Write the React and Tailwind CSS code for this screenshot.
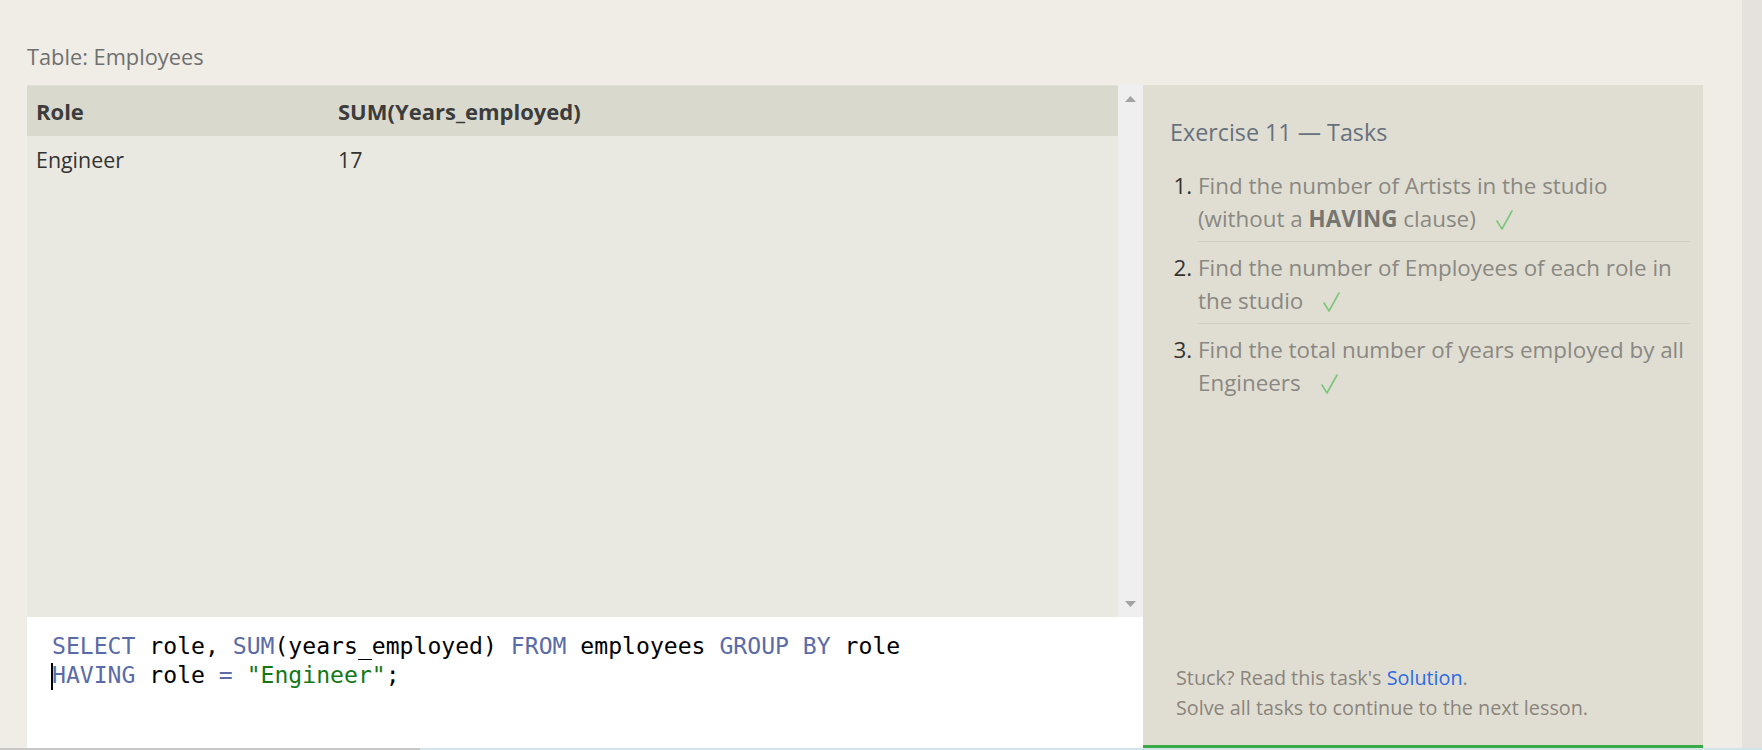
import React from "react";

function Check() {
  return (
    <svg width="17" height="20" viewBox="0 0 17 20" className="inline-block ml-[20px] align-[-3px]">
      <path d="M1 11 L6 19 L16 1" fill="none" stroke="#7cc67c" strokeWidth="1.6" strokeLinejoin="round" strokeLinecap="round" />
    </svg>
  );
}

const K = ({ children }) => <span className="text-[#5b6ba7]">{children}</span>;

export default function App() {
  return (
    <div className="w-[1762px] h-[750px] overflow-hidden flex flex-col bg-[#efede6] font-['Open_Sans',sans-serif]">
      <div className="flex h-[748px]">
        <div className="flex flex-col w-[1742px] pl-[27px] pr-[39px]">
          <div className="h-[85px] shrink-0 pt-[42px] text-[21.8px] leading-[30px] text-[#707070]">Table: Employees</div>
          <div className="flex flex-1 min-h-0">
            <div className="w-[1116px] flex flex-col">
              <div className="flex h-[532px] shrink-0">
                <div className="flex-1 bg-[#eae9e1] flex flex-col">
                  <div className="grid grid-cols-[302px_1fr] h-[51px] items-center bg-[#dad9ce] border-t border-[#e2e1d8] text-[22px] font-bold text-[#3c3c3c] pt-[1px]">
                    <div className="pl-[9px]">Role</div>
                    <div className="pl-[9px]">SUM(Years_employed)</div>
                  </div>
                  <div className="grid grid-cols-[302px_1fr] h-[49px] items-center text-[21.4px] text-[#333]">
                    <div className="pl-[9px]">Engineer</div>
                    <div className="pl-[9px]">17</div>
                  </div>
                </div>
                <div className="w-[25px] bg-[#efefef] flex flex-col items-center justify-between pt-[11px] pb-[10px]">
                  <svg width="11" height="6" viewBox="0 0 11 6"><path d="M5.5 0 L11 6 L0 6 Z" fill="#a3a3a3" /></svg>
                  <svg width="11" height="6" viewBox="0 0 11 6"><path d="M0 0 L11 0 L5.5 6 Z" fill="#a3a3a3" /></svg>
                </div>
              </div>
              <div className="flex-1 bg-white pt-[14.5px] pl-[25px] font-['DejaVu_Sans_Mono',monospace] text-[23.1px] leading-[29px] text-black whitespace-pre">
                <div>
                  <K>SELECT</K> role, <K>SUM</K>(years_employed) <K>FROM</K> employees <K>GROUP</K> <K>BY</K> role
                </div>
                <div>
                  <span className="relative">
                    <span className="absolute left-[-1px] top-[1px] w-[2px] h-[27px] bg-black" />
                  </span>
                  <K>HAVING</K> role <K>=</K> <span className="text-[#167716]">"Engineer"</span>;
                </div>
              </div>
            </div>
            <div className="w-[560px] bg-[#e0ded3] border-b-[3px] border-[#3aab47] flex flex-col pl-[27px] pr-[13px]">
              <div className="pt-[31px] text-[23.3px] leading-[32px] text-[#67717d]">Exercise 11 — Tasks</div>
              <ol className="mt-[12px] pl-[28px] list-decimal text-[22.4px] leading-[33px] text-[#8a8882] marker:text-[#333]">
                <li className="pt-[9px] pb-[6px] border-b border-[#d2cfc3]">
                  <span className="block whitespace-nowrap">Find the number of Artists in the studio</span>
                  <span className="block whitespace-nowrap">
                    (without a <b className="font-bold text-[#767570]">HAVING</b> clause)
                    <Check />
                  </span>
                </li>
                <li className="pt-[9px] pb-[6px] border-b border-[#d2cfc3]">
                  <span className="block whitespace-nowrap">Find the number of Employees of each role in</span>
                  <span className="block whitespace-nowrap">
                    the studio
                    <Check />
                  </span>
                </li>
                <li className="pt-[9px] pb-[6px]">
                  <span className="block whitespace-nowrap">Find the total number of years employed by all</span>
                  <span className="block whitespace-nowrap">
                    Engineers
                    <Check />
                  </span>
                </li>
              </ol>
              <div className="mt-auto pl-[6px] pb-[22px] text-[19.8px] leading-[30px] text-[#8b847c]">
                <div>
                  Stuck? Read this task's <span className="text-[#2d6ae3]">Solution</span>.
                </div>
                <div>Solve all tasks to continue to the next lesson.</div>
              </div>
            </div>
          </div>
        </div>
        <div className="w-[20px] bg-[#e5e2de]" />
      </div>
      <div className="h-[2px] flex">
        <div className="w-[420px] bg-[#c8c8c8]" />
        <div className="flex-1 bg-[#d3e3ea]" />
      </div>
    </div>
  );
}
